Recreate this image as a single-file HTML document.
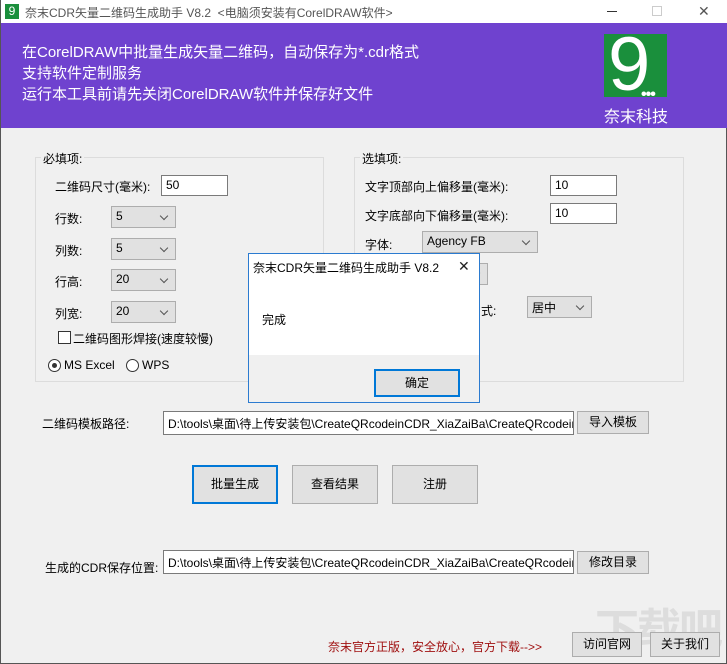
<!DOCTYPE html><html><head><meta charset="utf-8"><style>
*{margin:0;padding:0;box-sizing:border-box}
body{width:727px;height:664px;background:#f0f0f0;font-family:"Liberation Sans","Noto Sans CJK SC",sans-serif;font-size:12px;color:#000;position:relative;overflow:hidden;border:1px solid #555;border-top:none}
.a{position:absolute;white-space:nowrap}
.in{position:absolute;background:#fff;border:1px solid #7a7a7a;padding:2px 4px;font-size:12px;white-space:nowrap}
.cb{position:absolute;background:#e1e1e1;border:1px solid #adadad;padding:2px 4px}
.cb:after{content:"";position:absolute;right:8px;top:6px;width:5px;height:5px;border-right:1px solid #555;border-bottom:1px solid #555;transform:rotate(45deg)}
.bt{position:absolute;background:#e1e1e1;border:1px solid #adadad;text-align:center;font-size:12px}
.gb{position:absolute;border:1px solid #dcdcdc}
</style></head><body>
<div class="a" style="left:0;top:0;width:727px;height:24px;background:#fff"></div>
<div class="a" style="left:4px;top:4px;width:14px;height:15px;background:#1a8f3c;color:#fff;font-size:12px;line-height:14px;text-align:center">9</div>
<div class="a" style="left:24px;top:4px;color:#555;font-size:12px">奈末CDR矢量二维码生成助手 V8.2 &nbsp;&lt;电脑须安装有CorelDRAW软件&gt;</div>
<div class="a" style="left:606px;top:11px;width:10px;height:1px;background:#333"></div>
<div class="a" style="left:651px;top:6px;width:10px;height:10px;border:1px solid #ccc"></div>
<div class="a" style="left:697px;top:3px;color:#555;font-size:14px">✕</div>
<div class="a" style="left:0;top:23px;width:727px;height:105px;background:#6f42cf"></div>
<div class="a" style="left:21px;top:42px;color:#fff;font-size:15px;line-height:21px">在CorelDRAW中批量生成矢量二维码，自动保存为*.cdr格式<br>支持软件定制服务<br>运行本工具前请先关闭CorelDRAW软件并保存好文件</div>
<div class="a" style="left:603px;top:34px;width:63px;height:63px;background:#1a8f3c;overflow:hidden"><div style="position:absolute;left:4px;top:-14px;color:#fff;font-size:76px;line-height:90px;font-family:'Liberation Sans',sans-serif">9</div><div style="position:absolute;left:37px;top:52px;color:#fff;font-size:16px;letter-spacing:-1px;font-weight:bold">•••</div></div>
<div class="a" style="left:603px;top:103px;color:#fff;font-size:16px">奈末科技</div>

<div class="gb" style="left:34px;top:157px;width:289px;height:225px"></div>
<div class="a" style="left:40px;top:150px;background:#f0f0f0;padding:0 2px">必填项:</div>
<div class="a" style="left:54px;top:178px">二维码尺寸(毫米):</div>
<div class="in" style="left:160px;top:175px;width:67px;height:21px">50</div>
<div class="a" style="left:54px;top:210px">行数:</div><div class="cb" style="left:110px;top:206px;width:65px;height:22px">5</div>
<div class="a" style="left:54px;top:242px">列数:</div><div class="cb" style="left:110px;top:238px;width:65px;height:22px">5</div>
<div class="a" style="left:54px;top:273px">行高:</div><div class="cb" style="left:110px;top:269px;width:65px;height:22px">20</div>
<div class="a" style="left:54px;top:305px">列宽:</div><div class="cb" style="left:110px;top:301px;width:65px;height:22px">20</div>
<div class="a" style="left:57px;top:331px;width:13px;height:13px;border:1px solid #333;background:#fff"></div>
<div class="a" style="left:72px;top:330px">二维码图形焊接(速度较慢)</div>
<div class="a" style="left:47px;top:359px;width:13px;height:13px;border:1px solid #333;border-radius:50%;background:#fff"><div style="margin:3px;width:5px;height:5px;border-radius:50%;background:#333"></div></div>
<div class="a" style="left:63px;top:358px">MS Excel</div>
<div class="a" style="left:125px;top:359px;width:13px;height:13px;border:1px solid #333;border-radius:50%;background:#fff"></div>
<div class="a" style="left:141px;top:358px">WPS</div>

<div class="gb" style="left:353px;top:157px;width:330px;height:225px"></div>
<div class="a" style="left:359px;top:150px;background:#f0f0f0;padding:0 2px">选填项:</div>
<div class="a" style="left:364px;top:178px">文字顶部向上偏移量(毫米):</div>
<div class="in" style="left:549px;top:175px;width:67px;height:21px">10</div>
<div class="a" style="left:364px;top:207px">文字底部向下偏移量(毫米):</div>
<div class="in" style="left:549px;top:203px;width:67px;height:21px">10</div>
<div class="a" style="left:364px;top:236px">字体:</div>
<div class="cb" style="left:421px;top:231px;width:116px;height:22px">Agency FB</div>
<div class="cb" style="left:460px;top:263px;width:27px;height:22px"></div>
<div class="a" style="left:480px;top:302px">式:</div>
<div class="cb" style="left:526px;top:296px;width:65px;height:22px">居中</div>

<div class="a" style="left:247px;top:253px;width:232px;height:150px;background:#f0f0f0;border:1px solid #2b7bd0"></div>
<div class="a" style="left:248px;top:254px;width:230px;height:101px;background:#fff"></div>
<div class="a" style="left:252px;top:259px">奈末CDR矢量二维码生成助手 V8.2</div>
<div class="a" style="left:457px;top:258px;font-size:14px;color:#222">✕</div>
<div class="a" style="left:261px;top:311px">完成</div>
<div class="bt" style="left:373px;top:369px;width:86px;height:28px;border:2px solid #0078d7;line-height:24px">确定</div>

<div class="a" style="left:41px;top:415px">二维码模板路径:</div>
<div class="in" style="left:162px;top:411px;width:411px;height:24px;overflow:hidden;font-size:12px;padding-top:3px">D:\tools\桌面\待上传安装包\CreateQRcodeinCDR_XiaZaiBa\CreateQRcodeinCDR</div>
<div class="bt" style="left:576px;top:411px;width:72px;height:23px;line-height:21px">导入模板</div>
<div class="bt" style="left:191px;top:465px;width:86px;height:39px;line-height:35px;border:2px solid #0078d7">批量生成</div>
<div class="bt" style="left:291px;top:465px;width:86px;height:39px;line-height:37px">查看结果</div>
<div class="bt" style="left:391px;top:465px;width:86px;height:39px;line-height:37px">注册</div>
<div class="a" style="left:44px;top:559px">生成的CDR保存位置:</div>
<div class="in" style="left:162px;top:550px;width:411px;height:24px;overflow:hidden;padding-top:3px">D:\tools\桌面\待上传安装包\CreateQRcodeinCDR_XiaZaiBa\CreateQRcodeinCDR</div>
<div class="bt" style="left:576px;top:551px;width:72px;height:23px;line-height:21px">修改目录</div>
<div class="a" style="left:594px;top:594px;font-size:44px;color:#ddd;font-weight:bold;letter-spacing:-2px">下载吧</div>
<div class="a" style="left:327px;top:638px;color:#a01010">奈末官方正版，安全放心，官方下载--&gt;&gt;</div>
<div class="bt" style="left:571px;top:632px;width:70px;height:25px;line-height:23px">访问官网</div>
<div class="bt" style="left:649px;top:632px;width:70px;height:25px;line-height:23px">关于我们</div>
</body></html>
